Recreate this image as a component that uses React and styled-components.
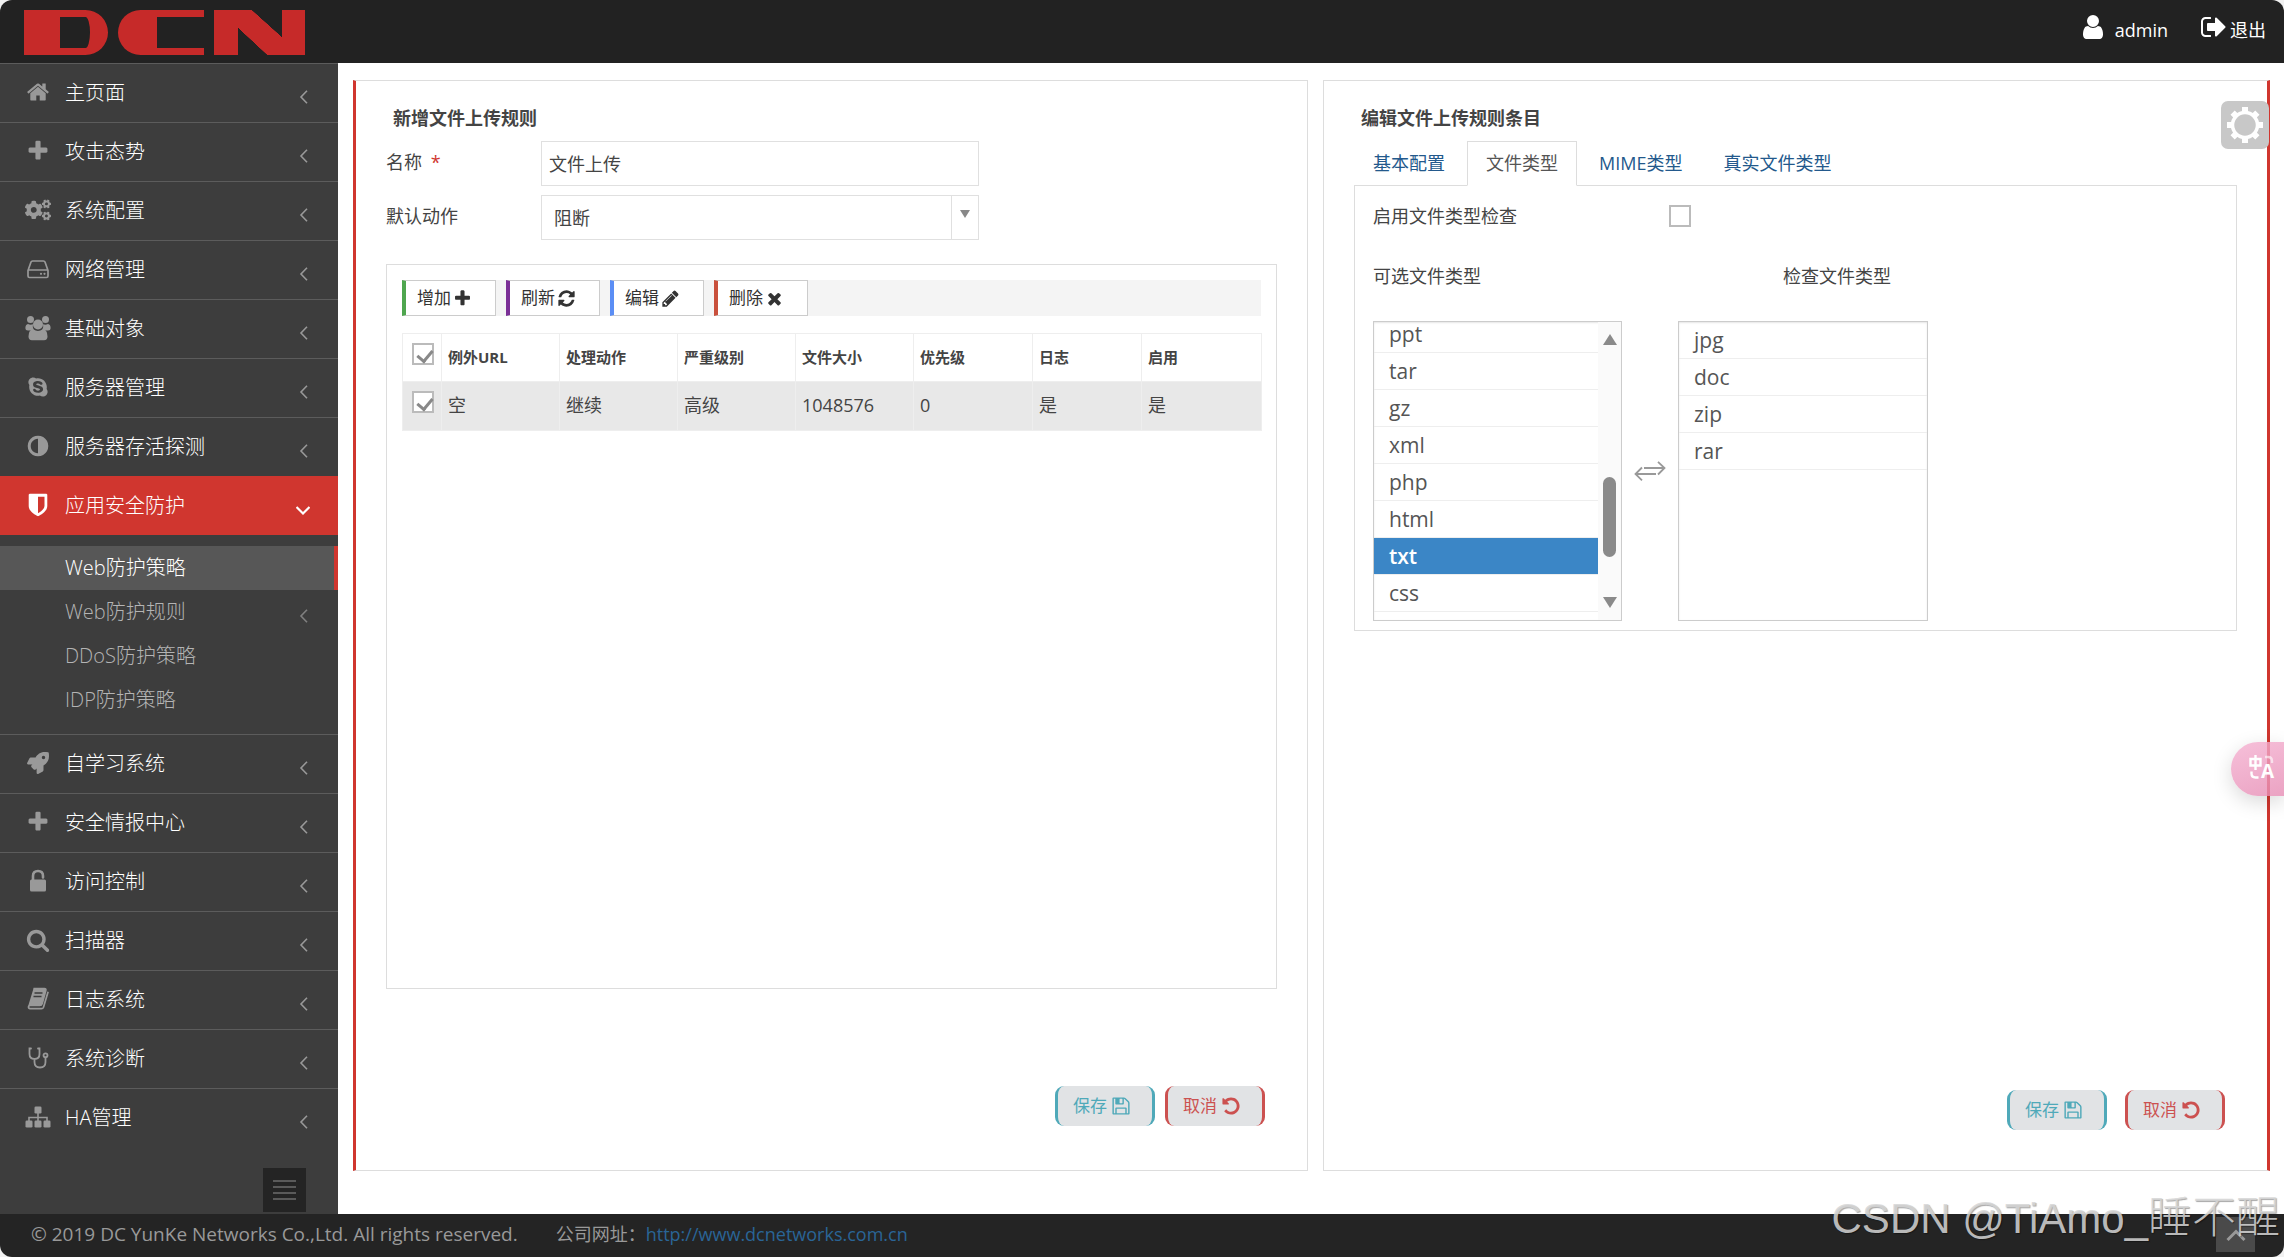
import React, {useEffect, useRef, useState} from 'react';
import styled, {createGlobalStyle} from 'styled-components';
import {FaCogs, FaRocket, FaSkype} from 'react-icons/fa';

const glyphs = {
    home: 'M1472 992v480q0 26-19 45t-45 19h-384v-384h-256v384h-384q-26 0-45-19t-19-45v-480q0-1 .5-3t.5-3l575-474 575 474q1 2 1 6zm223-69l-62 74q-8 9-21 11h-3q-13 0-21-7l-692-577-692 577q-12 8-24 7-13-2-21-11l-62-74q-8-10-7-23.5t11-21.5l719-599q32-26 76-26t76 26l244 204v-195q0-14 9-23t23-9h192q14 0 23 9t9 23v408l219 182q10 8 11 21.5t-7 23.5z',
    plus: 'M1600 736v192q0 40-28 68t-68 28h-416v416q0 40-28 68t-68 28h-192q-40 0-68-28t-28-68v-416h-416q-40 0-68-28t-28-68v-192q0-40 28-68t68-28h416v-416q0-40 28-68t68-28h192q40 0 68 28t28 68v416h416q40 0 68 28t28 68z',
    adjust: 'M896 1440v-1088q-148 0-273 73t-198 198-73 273 73 273 198 198 273 73zm768-544q0 209-103 385.5t-279.5 279.5-385.5 103-385.5-103-279.5-279.5-103-385.5 103-385.5 279.5-279.5 385.5-103 385.5 103 279.5 279.5 103 385.5z',
    shield: 'M1344 960v-640h-448v1137q119-63 213-137 235-184 235-360zm192-768v768q0 86-33.5 170.5t-83 150-118 127.5-126.5 103-121 77.5-89.5 49.5-42.5 20q-12 6-26 6t-26-6q-16-7-42.5-20t-89.5-49.5-121-77.5-126.5-103-118-127.5-83-150-33.5-170.5v-768q0-26 19-45t45-19h1152q26 0 45 19t19 45z',
    search: 'M1216 832q0-185-131.5-316.5t-316.5-131.5-316.5 131.5-131.5 316.5 131.5 316.5 316.5 131.5 316.5-131.5 131.5-316.5zm512 832q0 52-38 90t-90 38q-54 0-90-38l-343-342q-179 124-399 124-143 0-273.5-55.5t-225-150-150-225-55.5-273.5 55.5-273.5 150-225 225-150 273.5-55.5 273.5 55.5 225 150 150 225 55.5 273.5q0 220-124 399l343 343q37 37 37 90z',
    refresh: 'M1639 1056q0 5-1 7-64 268-268 434.5t-478 166.5q-146 0-282.5-55t-243.5-157l-129 129q-19 19-45 19t-45-19-19-45v-448q0-26 19-45t45-19h448q26 0 45 19t19 45-19 45l-137 137q71 66 161 102t187 36q134 0 250-65t186-179q11-17 53-117 8-23 30-23h192q13 0 22.5 9.5t9.5 22.5zm25-800v448q0 26-19 45t-45 19h-448q-26 0-45-19t-19-45 19-45l138-138q-148-137-349-137-134 0-250 65t-186 179q-11 17-53 117-8 23-30 23h-199q-13 0-22.5-9.5t-9.5-22.5v-7q65-268 270-434.5t480-166.5q146 0 284 55.5t245 156.5l130-129q19-19 45-19t45 19 19 45z',
    pencil: 'M491 1536l91-91-235-235-91 91v107h128v128h107zm523-928q0-22-22-22-10 0-17 7l-542 542q-7 7-7 17 0 22 22 22 10 0 17-7l542-542q7-7 7-17zm-54-192l416 416-832 832h-416v-416zm683 96q0 53-37 90l-166 166-416-416 166-165q36-38 90-38 53 0 91 38l235 234q37 39 37 91z',
    times: 'M1490 1322q0 40-28 68l-136 136q-28 28-68 28t-68-28l-294-294-294 294q-28 28-68 28t-68-28l-136-136q-28-28-28-68t28-68l294-294-294-294q-28-28-28-68t28-68l136-136q28-28 68-28t68 28l294 294 294-294q28-28 68-28t68 28l136 136q28 28 28 68t-28 68l-294 294 294 294q28 28 28 68z',
    save: 'M512 1536h768v-384h-768v384zm896 0h128v-896q0-14-10-38.5t-20-34.5l-281-281q-10-10-34-20t-39-10v416q0 40-28 68t-68 28h-576q-40 0-68-28t-28-68v-416h-128v1280h128v-416q0-40 28-68t68-28h832q40 0 68 28t28 68v416zm-384-928v-320q0-13-9.5-22.5t-22.5-9.5h-192q-13 0-22.5 9.5t-9.5 22.5v320q0 13 9.5 22.5t22.5 9.5h192q13 0 22.5-9.5t9.5-22.5zm640 32v928q0 40-28 68t-68 28h-1344q-40 0-68-28t-28-68v-1344q0-40 28-68t68-28h928q40 0 88 20t76 48l280 280q28 28 48 76t20 88z',
    undo: 'M1664 896q0 156-61 298t-164 245-245 164-298 61q-172 0-327-72.5t-264-204.5q-7-10-6.5-22.5t8.5-20.5l137-138q10-9 25-9 16 2 23 12 73 95 179 147t225 52q104 0 198.5-40.5t163.5-109.5 109.5-163.5 40.5-198.5-40.5-198.5-109.5-163.5-163.5-109.5-198.5-40.5q-98 0-188 35.5t-160 101.5l137 138q31 30 14 69-17 40-59 40h-448q-26 0-45-19t-19-45v-448q0-42 40-59 39-17 69 14l130 129q107-101 244.5-156.5t284.5-55.5q156 0 298 61t245 164 164 245 61 298z',
    user: 'M1536 1399q0 109-62.5 187t-150.5 78h-854q-88 0-150.5-78t-62.5-187q0-85 8.5-160.5t31.5-152 58.5-131 94-89 134.5-34.5q131 128 313 128t313-128q76 0 134.5 34.5t94 89 58.5 131 31.5 152 8.5 160.5zm-256-887q0 159-112.5 271.5t-271.5 112.5-271.5-112.5-112.5-271.5 112.5-271.5 271.5-112.5 271.5 112.5 112.5 271.5z',
    signOut: 'M704 1440q0 4 1 20t.5 26.5-3 23.5-10 19.5-20.5 6.5h-320q-119 0-203.5-84.5t-84.5-203.5v-704q0-119 84.5-203.5t203.5-84.5h320q13 0 22.5 9.5t9.5 22.5q0 4 1 20t.5 26.5-3 23.5-10 19.5-20.5 6.5h-320q-66 0-113 47t-47 113v704q0 66 47 113t113 47h312l11.5 1 11.5 3 8 5.5 7 9 2 13.5zm928-544q0 26-19 45l-544 544q-19 19-45 19t-45-19-19-45v-288h-448q-26 0-45-19t-19-45v-384q0-26 19-45t45-19h448v-288q0-26 19-45t45-19 45 19l544 544q19 19 19 45z',
}

const Glyph = ({name, size}) => (
    <svg width={size} height={size} viewBox="0 0 1792 1792" fill="currentColor" aria-hidden="true">
        <path d={glyphs[name]}/>
    </svg>
);

const HddIcon = () => (
    <svg width="24" height="24" viewBox="0 0 24 24" fill="none" stroke="currentColor" strokeWidth="1.7" aria-hidden="true">
        <path d="M2 13.5 5 5q.4-1 1.500-1h11q1.100 0 1.500 1l3 8.500V19q0 1.500-1.500 1.500h-17Q2 20.500 2 19zM2.500 13h19" strokeLinejoin="round"/>
        <circle cx="15" cy="16.800" r="1.100" fill="currentColor" stroke="none"/>
        <circle cx="18.500" cy="16.800" r="1.100" fill="currentColor" stroke="none"/>
    </svg>
);

const UsersIcon = () => (
    <svg width="26" height="26" viewBox="0 0 26 26" fill="currentColor" aria-hidden="true">
        <circle cx="5.500" cy="4.500" r="3.500"/>
        <circle cx="20.500" cy="4.500" r="3.500"/>
        <path d="M3 9q2.500 1.200 5 .2-1 3.300 1 6.300H3q-2.600 0-2.600-2.500Q.4 9.400 3 9zM23 9q-2.500 1.200-5 .2 1 3.300-1 6.300h6q2.600 0 2.600-2.500 0-3.600-2.600-4z"/>
        <circle cx="13" cy="9.500" r="5"/>
        <path d="M8.300 14.200q4.700 3.400 9.400 0 4.800.3 4.800 7.300 0 3.700-3.500 3.700H7q-3.500 0-3.500-3.700 0-7 4.800-7.300z"/>
    </svg>
);

const UnlockIcon = () => (
    <svg width="24" height="24" viewBox="0 0 24 24" aria-hidden="true">
        <path d="M7 12V7q0-5 5-5t5 5v1.500" fill="none" stroke="currentColor" strokeWidth="2.600" strokeLinecap="round"/>
        <rect x="4" y="10.500" width="16" height="12" rx="1.500" fill="currentColor"/>
    </svg>
);

const BookIcon = () => (
    <svg width="24" height="24" viewBox="0 0 24 24" aria-hidden="true">
        <path d="M7.500 1.500h10.800q2 0 1.500 2l-3.600 13q-.5 2-2.500 2H4q-1.500 0-1.500 1.300 0 1.900 1.500 1.900h11.500q1.500 0 2-1.500l4.600-15.500" fill="none" stroke="currentColor" strokeWidth="1.700" strokeLinejoin="round"/>
        <path d="M7.500 1.500h10.800q2 0 1.500 2l-3.600 13q-.5 2-2.500 2H2.300z" fill="currentColor"/>
        <path d="M8.500 6h8M7.500 9.500h8" stroke="#3d3d3d" strokeWidth="1.500"/>
    </svg>
);

const StethoscopeIcon = () => (
    <svg width="24" height="24" viewBox="0 0 24 24" fill="none" stroke="currentColor" strokeWidth="1.800" strokeLinecap="round" aria-hidden="true">
        <path d="M5 2.500H3.500V8q0 5 5 5t5-5V2.500H12M8.500 13v3q0 5.500 5.500 5.500t5.500-5.500v-4.500"/>
        <circle cx="19.500" cy="9.300" r="2"/>
    </svg>
);

const SitemapIcon = () => (
    <svg width="26" height="24" viewBox="0 0 26 24" fill="currentColor" aria-hidden="true">
        <path d="M4 16v-3.500h18V16M13 8v8" fill="none" stroke="currentColor" strokeWidth="1.600"/>
        <rect x="9.500" y="1.500" width="7" height="7" rx="1.300"/>
        <rect x=".5" y="15.500" width="7" height="7" rx="1.300"/>
        <rect x="9.500" y="15.500" width="7" height="7" rx="1.300"/>
        <rect x="18.500" y="15.500" width="7" height="7" rx="1.300"/>
    </svg>
);

const Angle = ({down}) => (
    <svg width="14" height="14" viewBox="0 0 14 14" fill="none" stroke="currentColor" strokeWidth={down ? 2.2 : 1.6} aria-hidden="true">
        <path d={down ? 'M0.500 4 7 10.500 13.500 4' : 'M11 0.800 5 7l6 6.200'}/>
    </svg>
);

const SwapIcon = () => (
    <svg width="32" height="20" viewBox="0 0 32 20" fill="none" stroke="#999" strokeWidth="1.800" aria-hidden="true">
        <path d="M10 7h20.500M24 .8 30.500 7 24 13.500M22 13H1.500M8 6.500 1.500 13 8 19.300"/>
    </svg>
);

const GearIcon = () => (
    <svg width="36" height="36" viewBox="-18 -18 36 36" fill="#fff" aria-hidden="true">
        {[0, 90].map(a => <path key={a} transform={`rotate(${a})`} d="M-3-18h6v5h-6zM-3 13h6v5h-6z"/>)}
        {[45, 135].map(a => <path key={a} transform={`rotate(${a})`} d="M-3-17.500h6v5h-6zM-3 12.500h6v5h-6z"/>)}
        <circle r="12.500" fill="none" stroke="#fff" strokeWidth="3.500"/>
    </svg>
);

const TranslateIcon = () => (
    <svg width="34" height="28" viewBox="0 0 34 28" aria-hidden="true">
        <g fill="none" stroke="#fff" strokeWidth="2.400">
            <path d="M2.500 6h10v6.500h-10zM7.500 2v15M3.500 18.500v2q0 4 4 4h3"/>
            <path d="M17 4h3q4 0 4 4v2" opacity=".6"/>
        </g>
        <text x="13" y="25" fontSize="19" fontWeight="700" fill="#fff" fontFamily="Open Sans, sans-serif">A</text>
    </svg>
);

const menuTop = [
    {label: '主页面', icon: <Glyph name="home" size={24}/>},
    {label: '攻击态势', icon: <Glyph name="plus" size={24}/>},
    {label: '系统配置', icon: <FaCogs size={26}/>},
    {label: '网络管理', icon: <HddIcon/>},
    {label: '基础对象', icon: <UsersIcon/>},
    {label: '服务器管理', icon: <FaSkype size={22}/>},
    {label: '服务器存活探测', icon: <Glyph name="adjust" size={24}/>},
]

const subMenu = [
    {label: 'Web防护策略', active: true},
    {label: 'Web防护规则', more: true},
    {label: 'DDoS防护策略'},
    {label: 'IDP防护策略'},
]

const menuBottom = [
    {label: '自学习系统', icon: <FaRocket size={22}/>},
    {label: '安全情报中心', icon: <Glyph name="plus" size={24}/>},
    {label: '访问控制', icon: <UnlockIcon/>},
    {label: '扫描器', icon: <Glyph name="search" size={24}/>},
    {label: '日志系统', icon: <BookIcon/>},
    {label: '系统诊断', icon: <StethoscopeIcon/>},
    {label: 'HA管理', icon: <SitemapIcon/>},
]

const tools = [
    {label: '增加', icon: 'plus', color: '#4fa64f'},
    {label: '刷新', icon: 'refresh', color: '#7a2f96'},
    {label: '编辑', icon: 'pencil', color: '#5b8ef5'},
    {label: '删除', icon: 'times', color: '#c9503c'},
]

const columns = ['例外URL', '处理动作', '严重级别', '文件大小', '优先级', '日志', '启用']
const rows = [['空', '继续', '高级', '1048576', '0', '是', '是']]

const tabs = ['基本配置', '文件类型', 'MIME类型', '真实文件类型']
const available = ['ppt', 'tar', 'gz', 'xml', 'php', 'html', 'txt', 'css']
const checked = ['jpg', 'doc', 'zip', 'rar']

const MenuItem = ({item, active}) => (
    <li>
        <MenuLink href="#" $active={active}>
            <MenuIcon>{item.icon}</MenuIcon>
            <MenuText>{item.label}</MenuText>
            <MenuArrow><Angle down={active}/></MenuArrow>
        </MenuLink>
    </li>
);

const Actions = ({gap}) => (
    <ActionRow $gap={gap}>
        <ActionButton type="button" $color="#4fa9b9">保存 <Glyph name="save" size={20}/></ActionButton>
        <ActionButton type="button" $color="#cc5150">取消 <Glyph name="undo" size={20}/></ActionButton>
    </ActionRow>
);

const RulePanel = () => (
    <Panel $side="left">
        <Title>新增文件上传规则</Title>
        <Field>
            <FieldLabel htmlFor="name">名称 <Required>*</Required></FieldLabel>
            <TextInput id="name" defaultValue="文件上传"/>
        </Field>
        <Field>
            <FieldLabel htmlFor="action">默认动作</FieldLabel>
            <SelectWrap>
                <Select id="action" defaultValue="阻断">
                    <option>阻断</option>
                    <option>继续</option>
                </Select>
                <SelectArrow/>
            </SelectWrap>
        </Field>
        <GridBox>
            <Toolbar>
                {tools.map(tool => (
                    <ToolButton type="button" key={tool.label} $color={tool.color}>
                        {tool.label}<Glyph name={tool.icon} size={19}/>
                    </ToolButton>
                ))}
            </Toolbar>
            <Table>
                <colgroup>
                    <Col $width={39}/>
                    <Col $width={118}/>
                    <Col $width={118}/>
                    <Col $width={118}/>
                    <Col $width={118}/>
                    <Col $width={119}/>
                    <Col $width={109}/>
                    <Col $width={120}/>
                </colgroup>
                <thead>
                    <tr>
                        <CheckHead><CheckBox type="checkbox" defaultChecked aria-label="全选"/></CheckHead>
                        {columns.map(name => <Head key={name}>{name}</Head>)}
                    </tr>
                </thead>
                <tbody>
                    {rows.map((row, i) => (
                        <tr key={i}>
                            <CheckCell><CheckBox type="checkbox" defaultChecked aria-label="选择"/></CheckCell>
                            {row.map((value, j) => <Cell key={j}>{value}</Cell>)}
                        </tr>
                    ))}
                </tbody>
            </Table>
        </GridBox>
        <Actions gap={10}/>
    </Panel>
);

const EntryPanel = () => {
    const listRef = useRef(null)
    const [selected, setSelected] = useState('txt')

    useEffect(() => {
        listRef.current.scrollTop = listRef.current.scrollHeight
    }, [])

    return (
        <Panel $side="right">
            <Title>编辑文件上传规则条目</Title>
            <Tabs role="tablist">
                {tabs.map((tab, i) => (
                    <Tab type="button" role="tab" key={tab} aria-selected={i === 1} $active={i === 1}>{tab}</Tab>
                ))}
            </Tabs>
            <TabBody role="tabpanel">
                <CheckRow>
                    <label htmlFor="enable">启用文件类型检查</label>
                    <CheckBox id="enable" type="checkbox"/>
                </CheckRow>
                <Transfer>
                    <ListLabel>可选文件类型</ListLabel>
                    <span/>
                    <ListLabel $indent>检查文件类型</ListLabel>
                    <ListBox>
                        <List role="listbox" aria-label="可选文件类型" ref={listRef}>
                            {available.map(type => (
                                <Option
                                    role="option"
                                    key={type}
                                    aria-selected={type === selected}
                                    $selected={type === selected}
                                    onClick={() => setSelected(type)}
                                >
                                    {type}
                                </Option>
                            ))}
                        </List>
                        <ScrollTrack aria-hidden="true">
                            <ScrollArrow/>
                            <ScrollThumb/>
                            <ScrollArrow $down/>
                        </ScrollTrack>
                    </ListBox>
                    <SwapCell><SwapIcon/></SwapCell>
                    <ListBox>
                        <List role="listbox" aria-label="检查文件类型">
                            {checked.map(type => <Option role="option" key={type}>{type}</Option>)}
                        </List>
                    </ListBox>
                </Transfer>
            </TabBody>
            <Actions gap={18}/>
            <SettingsButton type="button" aria-label="设置"><GearIcon/></SettingsButton>
        </Panel>
    );
};

const App = () => {
    return (
        <>
            <GlobalStyle/>
            <Page>
                <Header>
                    <Logo role="img" aria-label="DCN">
                        <LogoD/>
                        <LogoC/>
                        <LogoN/>
                    </Logo>
                    <UserLinks>
                        <UserLink href="#"><Glyph name="user" size={28}/><span>admin</span></UserLink>
                        <UserLink href="#" $tight><Glyph name="signOut" size={28}/><span>退出</span></UserLink>
                    </UserLinks>
                </Header>
                <Middle>
                    <Sidebar>
                        <Menu>
                            {menuTop.map(item => <MenuItem key={item.label} item={item}/>)}
                            <MenuItem item={{label: '应用安全防护', icon: <Glyph name="shield" size={26}/>}} active/>
                            <SubMenu>
                                {subMenu.map(item => (
                                    <li key={item.label}>
                                        <SubLink href="#" $active={item.active}>
                                            {item.label}
                                            {item.more && <MenuArrow><Angle/></MenuArrow>}
                                        </SubLink>
                                    </li>
                                ))}
                            </SubMenu>
                            {menuBottom.map(item => <MenuItem key={item.label} item={item}/>)}
                        </Menu>
                        <Toggle type="button" aria-label="收起菜单"><i/><i/><i/><i/></Toggle>
                    </Sidebar>
                    <Main>
                        <RulePanel/>
                        <EntryPanel/>
                    </Main>
                </Middle>
                <Footer>
                    <Copyright>© 2019 DC YunKe Networks Co.,Ltd. All rights reserved.</Copyright>
                    <span>公司网址：<FooterLink href="#">http://www.dcnetworks.com.cn</FooterLink></span>
                    <TopButton type="button" aria-label="回到顶部">
                        <svg width="20" height="14" viewBox="0 0 20 14" fill="none" stroke="#999" strokeWidth="3">
                            <path d="M1.500 12 10 3.500l8.500 8.500"/>
                        </svg>
                    </TopButton>
                </Footer>
                <TranslateButton type="button" aria-label="翻译"><TranslateIcon/></TranslateButton>
                <Watermark>CSDN @TiAmo_<b>睡不醒</b></Watermark>
            </Page>
        </>
    );
};

export default App;

const GlobalStyle = createGlobalStyle`
  * {
    box-sizing: border-box;
  }
  body {
    margin: 0;
    background: #f1f1f1;
    color: #444;
    font: 400 18px/24px "Open Sans", "Noto Sans CJK SC", sans-serif;
  }
  button, input, select {
    font: inherit;
    color: inherit;
    margin: 0;
  }
  a {
    color: inherit;
    text-decoration: none;
  }
  ul {
    list-style: none;
    margin: 0;
    padding: 0;
  }
  svg {
    flex: none;
    display: block;
  }
`
const Page = styled.div`
  position: relative;
  display: flex;
  flex-direction: column;
  min-height: 100vh;
  border-radius: 12px;
  overflow: hidden;
  background: #fff;
`
const Header = styled.header`
  display: flex;
  justify-content: space-between;
  height: 63px;
  padding: 10px 18px 8px 24px;
  background: #222;
`
const Logo = styled.div`
  display: flex;
  gap: 10px;
`
const LogoD = styled.span`
  width: 84px;
  border: solid #c62a29;
  border-width: 7px 18px 7px 36px;
  border-radius: 0 26px 26px 0;
`
const LogoC = styled.span`
  width: 86px;
  border: solid #c62a29;
  border-width: 7px 0 7px 39px;
  border-radius: 24px 0 0 24px;
`
const LogoN = styled.span`
  width: 91px;
  background:
    linear-gradient(to top right, #222 50%, transparent 51%) 24px 18px / 29px 27px no-repeat,
    linear-gradient(to bottom left, #222 50%, transparent 51%) 38px 0 / 30px 27px no-repeat,
    #c62a29;
`
const UserLinks = styled.nav`
  display: flex;
  gap: 32px;
  height: 40px;
`
const UserLink = styled.a`
  display: flex;
  align-items: center;
  gap: ${({$tight}) => ($tight ? '2px' : '8px')};
  color: #fff;
  svg {
    margin-bottom: 6px;
  }
`
const Middle = styled.div`
  display: flex;
  flex: 1;
`
const Sidebar = styled.aside`
  flex: none;
  display: flex;
  flex-direction: column;
  width: 338px;
  background: #3d3d3d;
  color: #fff;
  font-size: 20px;
  font-weight: 300;
`
const Menu = styled.ul`
  flex: 1;
`
const MenuLink = styled.a`
  display: flex;
  align-items: center;
  height: 59px;
  padding: 0 28px 0 22px;
  border-top: 1px solid ${({$active}) => ($active ? '#d0362f' : '#5c5c5c')};
  background: ${({$active}) => ($active ? '#d0362f' : 'transparent')};
  --icon: ${({$active}) => ($active ? '#fff' : '#999')};
`
const MenuIcon = styled.span`
  display: flex;
  justify-content: center;
  width: 32px;
  margin-right: 11px;
  padding-bottom: 3px;
  color: var(--icon);
`
const MenuText = styled.span`
  flex: 1;
`
const MenuArrow = styled.span`
  padding-top: 8px;
  color: var(--icon, #808080);
`
const SubMenu = styled.ul`
  height: 199px;
  padding-top: 11px;
`
const SubLink = styled.a`
  display: flex;
  align-items: center;
  justify-content: space-between;
  height: 44px;
  padding: 0 28px 0 65px;
  ${({$active}) => $active && `
    padding-right: 24px;
    border-right: 4px solid #d0362f;
    background: #575757;
  `}
  color: ${({$active}) => ($active ? '#fff' : '#b4b4b4')};
`
const Toggle = styled.button`
  align-self: flex-end;
  display: flex;
  flex-direction: column;
  justify-content: center;
  gap: 4px;
  width: 43px;
  height: 44px;
  margin: 0 32px 2px 0;
  padding: 0 10px;
  border: 0;
  background: #242424;
  i {
    height: 2px;
    background: #5a5a5a;
  }
`
const Main = styled.main`
  flex: 1;
  display: grid;
  grid-template-columns: 955fr 947fr;
  gap: 15px;
  padding: 17px 14px 43px 15px;
`
const Panel = styled.section`
  position: relative;
  display: flex;
  flex-direction: column;
  min-width: 0;
  border: 1px solid #ddd;
  border-${({$side}) => $side}: 3px solid #d0362f;
  padding: ${({$side}) => ($side === 'left' ? '26px 30px 44px 30px' : '26px 30px 40px 30px')};
`
const Title = styled.h2`
  margin: 0 0 11px;
  padding-left: 7px;
  font-size: 18px;
  line-height: 23px;
  font-weight: 700;
`
const Field = styled.div`
  display: flex;
  align-items: center;
  margin-bottom: 9px;
`
const FieldLabel = styled.label`
  width: 155px;
  padding-bottom: 4px;
`
const Required = styled.span`
  margin-left: 4px;
  color: #d0362f;
`
const TextInput = styled.input`
  width: 438px;
  height: 45px;
  padding: 0 7px 2px;
  border: 1px solid #e0e0e0;
  outline: 0;
  background: #fff;
`
const SelectWrap = styled.div`
  position: relative;
  width: 438px;
`
const Select = styled.select`
  appearance: none;
  width: 100%;
  height: 45px;
  padding: 0 40px 0 12px;
  border: 1px solid #e0e0e0;
  border-radius: 0;
  background: #fff;
`
const SelectArrow = styled.span`
  position: absolute;
  top: 1px;
  right: 1px;
  bottom: 1px;
  width: 27px;
  border-left: 1px solid #e0e0e0;
  pointer-events: none;
  &:after {
    content: "";
    position: absolute;
    top: 14px;
    left: 8px;
    border: solid transparent;
    border-width: 8px 5px 0;
    border-top-color: #888;
  }
`
const GridBox = styled.div`
  flex: 1;
  margin: 15px 0 97px;
  padding: 15px;
  border: 1px solid #ddd;
`
const Toolbar = styled.div`
  display: flex;
  gap: 10px;
  height: 36px;
  margin-bottom: 17px;
  background: #f4f4f4;
`
const ToolButton = styled.button`
  display: flex;
  align-items: center;
  gap: 2px;
  width: 94px;
  padding: 0 0 0 11px;
  border: 1px solid #ccc;
  border-left: 4px solid ${({$color}) => $color};
  background: #fff;
  color: #333;
  font-size: 17px;
`
const Table = styled.table`
  width: 100%;
  border-collapse: collapse;
  table-layout: fixed;
  border-top: 1px solid #ddd;
  tbody tr {
    background: #e8e8e8;
  }
`
const Col = styled.col`
  width: ${({$width}) => $width}px;
`
const Head = styled.th`
  height: 48px;
  padding: 0 6px 2px;
  border: 1px solid #eee;
  text-align: left;
  font-size: 15px;
  font-weight: 700;
`
const Cell = styled.td`
  height: 49px;
  padding: 0 6px 2px;
  border: 1px solid #eee;
`
const CheckHead = styled(Head)`
  padding: 0 0 8px 9px;
`
const CheckCell = styled(Cell)`
  padding: 0 0 8px 9px;
`
const CheckBox = styled.input`
  appearance: none;
  display: block;
  position: relative;
  flex: none;
  width: 22px;
  height: 22px;
  border: 2px solid #bbb;
  background: #fff;
  &:checked:after {
    content: "";
    position: absolute;
    top: 2px;
    left: 6px;
    width: 7px;
    height: 12px;
    border: solid #888;
    border-width: 0 3px 3px 0;
    transform: rotate(40deg);
  }
`
const ActionRow = styled.div`
  display: flex;
  justify-content: flex-end;
  gap: ${({$gap}) => $gap}px;
  padding-right: 12px;
  margin-top: auto;
`
const ActionButton = styled.button`
  display: flex;
  align-items: center;
  gap: 4px;
  width: 100px;
  height: 40px;
  padding: 0 0 0 15px;
  border: solid ${({$color}) => $color};
  border-width: 0 3px;
  border-radius: 9px;
  background: #e1e3e5;
  color: ${({$color}) => $color};
  font-size: 17px;
`
const Tabs = styled.div`
  display: flex;
  gap: 3px;
  margin-bottom: -1px;
`
const Tab = styled.button`
  height: 45px;
  padding: 0 18px 2px;
  border: 1px solid ${({$active}) => ($active ? '#ddd' : 'transparent')};
  border-bottom-color: ${({$active}) => ($active ? '#fff' : 'transparent')};
  background: ${({$active}) => ($active ? '#fff' : 'transparent')};
  color: ${({$active}) => ($active ? '#555' : '#23598c')};
  z-index: ${({$active}) => ($active ? 1 : 0)};
`
const TabBody = styled.div`
  padding: 18px 18px 9px;
  border: 1px solid #ddd;
`
const CheckRow = styled.div`
  display: flex;
  align-items: center;
  height: 24px;
  margin-bottom: 36px;
  label {
    width: 296px;
  }
`
const Transfer = styled.div`
  display: grid;
  grid-template-columns: 249px 56px 250px;
  row-gap: 33px;
`
const ListLabel = styled.span`
  padding-left: ${({$indent}) => ($indent ? '105px' : '0')};
`
const ListBox = styled.div`
  display: flex;
  height: 300px;
  border: 1px solid #ccc;
  box-shadow: inset 0 1px 2px rgba(0, 0, 0, 0.1);
`
const List = styled.ul`
  flex: 1;
  padding-bottom: 8px;
  overflow-y: auto;
  scrollbar-width: none;
`
const Option = styled.li`
  height: 37px;
  padding: 6px 15px;
  border-bottom: 1px solid #eee;
  background: ${({$selected}) => ($selected ? '#3b86c6' : 'transparent')};
  color: ${({$selected}) => ($selected ? '#fff' : '#555')};
  font-size: 21px;
  font-weight: ${({$selected}) => ($selected ? 600 : 400)};
  line-height: 24px;
`
const ScrollTrack = styled.div`
  display: flex;
  flex-direction: column;
  align-items: center;
  justify-content: space-between;
  width: 23px;
  padding: 12px 0;
  background: #fafafa;
`
const ScrollArrow = styled.span`
  border: solid transparent;
  border-width: ${({$down}) => ($down ? '11px 7px 0' : '0 7px 11px')};
  border-${({$down}) => ($down ? 'top' : 'bottom')}-color: #8a8a8a;
`
const ScrollThumb = styled.span`
  width: 13px;
  height: 80px;
  margin-top: 92px;
  border-radius: 7px;
  background: #8a8a8a;
`
const SwapCell = styled.span`
  display: flex;
  align-items: center;
  justify-content: center;
`
const SettingsButton = styled.button`
  position: absolute;
  top: 20px;
  right: -2px;
  display: flex;
  align-items: center;
  justify-content: center;
  width: 48px;
  height: 48px;
  padding: 0;
  border: 0;
  border-radius: 7px;
  background: #c8c8c8;
`
const Footer = styled.footer`
  display: flex;
  align-items: center;
  gap: 38px;
  height: 43px;
  padding: 0 29px 4px 31px;
  background: #242424;
  color: #999;
`
const Copyright = styled.span`
  font-size: 19px;
`
const FooterLink = styled.a`
  color: #2a6496;
`
const TopButton = styled.button`
  display: flex;
  align-items: center;
  justify-content: center;
  width: 39px;
  height: 35px;
  margin: 2px 0 0 auto;
  padding: 0;
  border: 0;
  background: #4a4a4a;
`
const TranslateButton = styled.button`
  position: absolute;
  top: 742px;
  right: 0;
  width: 53px;
  height: 54px;
  padding: 0 0 4px 17px;
  border: 0;
  border-radius: 27px 0 0 27px;
  background: linear-gradient(160deg, rgba(244, 176, 208, 0.8), rgba(230, 140, 180, 0.8));
  box-shadow: 0 6px 20px rgba(0, 0, 0, 0.15);
`
const Watermark = styled.span`
  position: absolute;
  right: 4px;
  bottom: 8px;
  color: rgba(215, 215, 215, 0.85);
  font: 300 42px/60px "Liberation Sans", "Noto Sans CJK SC", sans-serif;
  text-shadow: 1px 1px 1px rgba(0, 0, 0, 0.35);
  pointer-events: none;
  b {
    font-size: 44px;
    font-weight: 300;
  }
`
